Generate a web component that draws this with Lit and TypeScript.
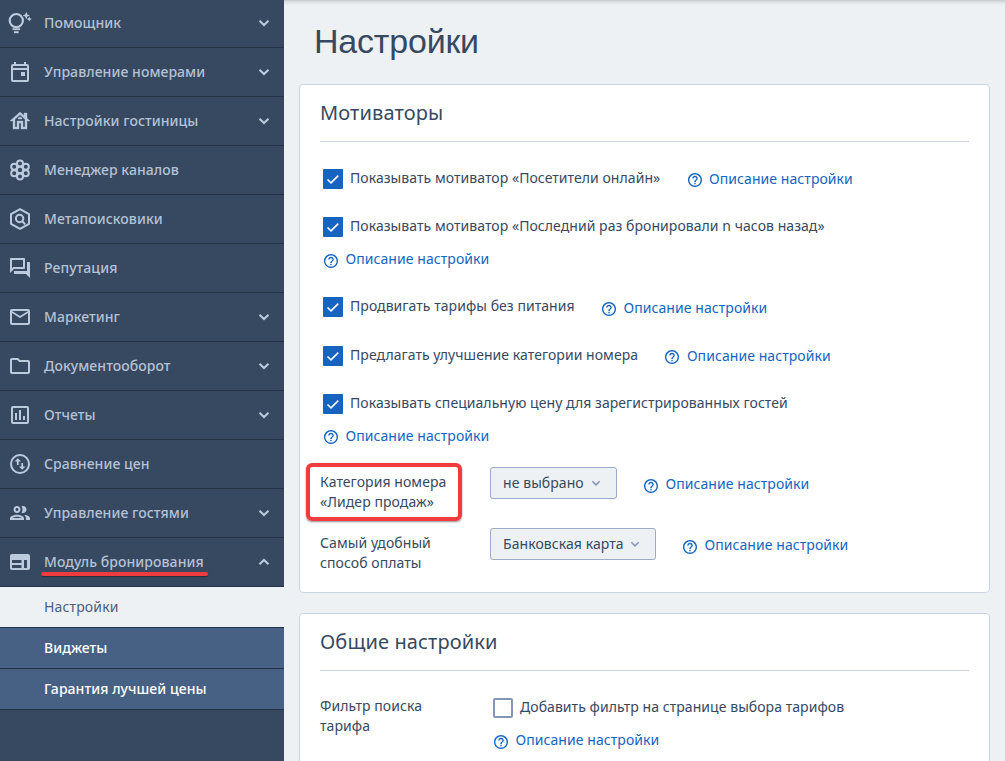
import { LitElement, html, css, svg, nothing } from "lit";
import { customElement, property } from "lit/decorators.js";
import { classMap } from "lit/directives/class-map.js";

const icons: Record<string, unknown> = {
  bulb: svg`<g fill="none" stroke="currentColor" stroke-width="2.2"><circle cx="8.300" cy="9.600" r="6.600"/><path d="M4.500 18.200h7.600M4.500 18.200" stroke-width="1.800"/><path d="M6 21.200h4.600" stroke-width="2"/></g><path d="M18.300.8l1.100 2.600 2.600 1.100-2.600 1.100-1.100 2.600-1.100-2.600-2.600-1.100 2.600-1.100zM21.300 5.600l.8 1.700 1.700.8-1.700.8-.8 1.700-.8-1.700-1.700-.8 1.700-.8z"/>`,
  event: svg`<path d="M19 4h-1V2h-2v2H8V2H6v2H5a2 2 0 0 0-2 2v14a2 2 0 0 0 2 2h14a2 2 0 0 0 2-2V6a2 2 0 0 0-2-2zm0 16H5V10h14v10zm0-12H5V6h14v2zM17 12h-4v4h4z"/>`,
  house: svg`<g stroke="currentColor" stroke-width=".35"><path d="M19 9.300V4h-3v2.600L12 3 2 12h3v8h6v-6h2v6h6v-8h3l-3-2.700zM17 18h-2v-6H9v6H7v-7.810l5-4.500 5 4.500V18z"/><path d="M10 10h4c0-1.100-.9-2-2-2s-2 .9-2 2z"/></g>`,
  hive: svg`<g fill="none" stroke="currentColor" stroke-width="2"><circle cx="12" cy="12" r="3.200"/><circle cx="12" cy="5.400" r="3"/><circle cx="12" cy="18.600" r="3"/><circle cx="6.200" cy="8.700" r="3"/><circle cx="17.800" cy="8.700" r="3"/><circle cx="6.200" cy="15.300" r="3"/><circle cx="17.800" cy="15.300" r="3"/></g>`,
  hexSearch: svg`<g fill="none" stroke="currentColor" stroke-width="2"><path d="M12 2.200l9 5v9.600l-9 5-9-5V7.200z" stroke-linejoin="round"/><circle cx="11.600" cy="11.500" r="3.700"/><path d="M14.200 14.200l3 3.200"/></g>`,
  forum: svg`<path d="M15 4v7H5.170L4 12.170V4h11m1-2H3c-.55 0-1 .45-1 1v14l4-4h10c.55 0 1-.45 1-1V3c0-.55-.45-1-1-1zm5 4h-2v9H6v2c0 .55.45 1 1 1h11l4 4V7c0-.55-.45-1-1-1z"/>`,
  mail: svg`<path d="M22 6c0-1.100-.9-2-2-2H4c-1.100 0-2 .9-2 2v12c0 1.100.9 2 2 2h16c1.100 0 2-.9 2-2V6zm-2 0l-8 5-8-5h16zm0 12H4V8l8 5 8-5v10z"/>`,
  folder: svg`<path d="M9.170 6l2 2H20v10H4V6h5.170M10 4H4c-1.100 0-1.990.9-1.990 2L2 18c0 1.100.9 2 2 2h16c1.100 0 2-.9 2-2V8c0-1.100-.9-2-2-2h-8l-2-2z"/>`,
  chart: svg`<path d="M19 3H5a2 2 0 0 0-2 2v14a2 2 0 0 0 2 2h14a2 2 0 0 0 2-2V5a2 2 0 0 0-2-2zm0 16H5V5h14v14zM7 10h2v7H7zM11 7h2v10h-2zM15 13h2v4h-2z"/>`,
  swap: svg`<circle cx="12" cy="12" r="9" fill="none" stroke="currentColor" stroke-width="2"/><path d="M6.500 9.500L9.800 6.200l3.300 3.300h-2.400V13H8.900V9.500zM17.500 14.500l-3.300 3.300-3.300-3.300h2.400V11h1.800v3.500z"/>`,
  people: svg`<path d="M9 12c1.930 0 3.500-1.570 3.500-3.500S10.930 5 9 5 5.500 6.570 5.500 8.500 7.070 12 9 12zm0-5c.83 0 1.500.67 1.500 1.500S9.830 10 9 10s-1.500-.67-1.500-1.500S8.170 7 9 7zm0 6.750c-2.340 0-7 1.170-7 3.500V19h14v-1.750c0-2.330-4.660-3.500-7-3.500zM4.340 17c.84-.58 2.870-1.250 4.660-1.250s3.820.67 4.660 1.250H4.340zm11.700-3.190c1.160.84 1.960 1.960 1.960 3.440V19h4v-1.750c0-2.020-3.500-3.170-5.960-3.440zM15 12c1.930 0 3.500-1.570 3.500-3.500S16.930 5 15 5c-.54 0-1.040.13-1.500.35.63.89 1 1.980 1 3.150s-.37 2.260-1 3.150c.46.22.96.35 1.500.35z"/>`,
  web: svg`<path d="M20 4H4c-1.100 0-1.990.9-1.990 2L2 18c0 1.100.9 2 2 2h16c1.100 0 2-.9 2-2V6c0-1.100-.9-2-2-2zm-6.500 14H4v-3h9.500v3zm0-5H4v-3h9.500v3zm5.500 5h-3v-8h3v8z"/>`,
};

interface NavItem {
  label: string;
  icon: string;
  expand?: "down" | "up";
  marked?: boolean;
}

const NAV: NavItem[] = [
  { label: "Помощник", icon: "bulb", expand: "down" },
  { label: "Управление номерами", icon: "event", expand: "down" },
  { label: "Настройки гостиницы", icon: "house", expand: "down" },
  { label: "Менеджер каналов", icon: "hive" },
  { label: "Метапоисковики", icon: "hexSearch" },
  { label: "Репутация", icon: "forum" },
  { label: "Маркетинг", icon: "mail", expand: "down" },
  { label: "Документооборот", icon: "folder", expand: "down" },
  { label: "Отчеты", icon: "chart", expand: "down" },
  { label: "Сравнение цен", icon: "swap" },
  { label: "Управление гостями", icon: "people", expand: "down" },
  { label: "Модуль бронирования", icon: "web", expand: "up", marked: true },
];

const SUB_NAV = [
  { label: "Настройки", active: true },
  { label: "Виджеты", active: false },
  { label: "Гарантия лучшей цены", active: false },
];

@customElement("side-nav")
class SideNav extends LitElement {
  static styles = css`
    :host {
      display: block;
      width: 284px;
      flex: none;
      height: 761px;
      overflow: hidden;
      background: #364961;
      color: #b5c1d5;
      font-weight: 500;
    }
    .list {
      margin-top: -1px;
    }
    .item {
      display: flex;
      align-items: center;
      height: 48px;
      padding: 0 12px 0 8px;
      border-bottom: 1px solid #243245;
    }
    .icon {
      width: 24px;
      height: 24px;
      flex: none;
      fill: currentColor;
      color: #bccade;
    }
    .label {
      position: relative;
      margin-left: 12px;
      white-space: nowrap;
    }
    .mark {
      position: absolute;
      left: -3px;
      top: 20px;
      width: 167px;
      height: 4px;
      border-radius: 2px;
      background: #ef3a3e;
      box-shadow: 0 1px 1px rgba(20, 20, 30, 0.5);
    }
    .chevron {
      width: 16px;
      height: 16px;
      margin-left: auto;
      fill: none;
      stroke: #bccade;
      stroke-width: 2.1;
    }
    .up {
      transform: rotate(180deg);
    }
    .sub {
      display: flex;
      align-items: center;
      height: 40px;
      padding-left: 44px;
      border-bottom: 1px solid #243245;
      background: #476185;
      color: #fff;
    }
    .active {
      background: #edf1f4;
      color: #4c5f7a;
      font-weight: 400;
      letter-spacing: 0.15px;
    }
  `;

  render() {
    return html`
      <nav class="list">
        ${NAV.map(
          (item) => html`
            <div class="item">
              <svg class="icon" viewBox="0 0 24 24">${icons[item.icon]}</svg>
              <span class="label"
                >${item.label}${item.marked ? html`<i class="mark"></i>` : nothing}</span
              >
              ${item.expand
                ? html`<svg
                    class=${classMap({ chevron: true, up: item.expand === "up" })}
                    viewBox="0 0 16 16"
                  >
                    <path d="M3.500 5.800l4.500 4.200 4.500-4.200" />
                  </svg>`
                : nothing}
            </div>
          `,
        )}
        ${SUB_NAV.map(
          (item) => html`<div class=${classMap({ sub: true, active: item.active })}>${item.label}</div>`,
        )}
      </nav>
    `;
  }
}

@customElement("help-link")
class HelpLink extends LitElement {
  @property({ type: Boolean, reflect: true }) low = false;

  static styles = css`
    :host {
      display: flex;
      align-items: center;
      height: 20px;
      color: #1565c0;
      white-space: nowrap;
    }
    .icon {
      width: 14px;
      height: 14px;
      margin: 2px 7.5px 0 0;
      fill: currentColor;
    }
    :host([low]) .icon {
      margin-top: 4px;
    }
  `;

  render() {
    return html`
      <svg class="icon" viewBox="2 2 20 20">
        <path
          d="M11 18h2v-2h-2v2zm1-16C6.480 2 2 6.480 2 12s4.480 10 10 10 10-4.480 10-10S17.520 2 12 2zm0 18c-4.410 0-8-3.590-8-8s3.590-8 8-8 8 3.590 8 8-3.590 8-8 8zm0-14c-2.210 0-4 1.790-4 4h2c0-1.100.9-2 2-2s2 .9 2 2c0 2-3 1.750-3 5h2c0-2.250 3-2.500 3-5 0-2.210-1.790-4-4-4z"
        />
      </svg>
      <span>Описание настройки</span>
    `;
  }
}

@customElement("check-box")
class CheckBox extends LitElement {
  @property({ type: Boolean }) checked = false;
  @property() label = "";

  static styles = css`
    :host {
      display: flex;
      align-items: center;
      height: 20px;
      white-space: nowrap;
      letter-spacing: 0.055px;
    }
    .box {
      box-sizing: border-box;
      width: 20px;
      height: 20px;
      flex: none;
      border: 2px solid #8497b8;
      border-radius: 2px;
      background: #fff;
    }
    .on {
      border: 0;
      border-radius: 1px;
      background: #1565c0;
    }
    .tick {
      display: block;
      width: 20px;
      height: 20px;
      fill: none;
      stroke: #fff;
      stroke-width: 1.6;
    }
    .text {
      margin: -2px 0 0 7px;
    }
  `;

  render() {
    return html`
      <span class=${classMap({ box: true, on: this.checked })}>
        ${this.checked
          ? html`<svg class="tick" viewBox="0 0 20 20"><path d="M4.500 10.500l3.500 3.400 7.300-7.300" /></svg>`
          : nothing}
      </span>
      <span class="text">${this.label}</span>
    `;
  }
}

@customElement("select-button")
class SelectButton extends LitElement {
  @property() value = "";

  static styles = css`
    :host {
      box-sizing: border-box;
      display: flex;
      align-items: center;
      height: 32px;
      padding: 0 15px 0 12px;
      border: 1px solid #99abc6;
      border-radius: 3px;
      background: #edf1f4;
      white-space: nowrap;
    }
    .arrow {
      width: 10px;
      height: 10px;
      margin-left: auto;
      fill: none;
      stroke: #8497b8;
      stroke-width: 1.5;
    }
  `;

  render() {
    return html`
      <span>${this.value}</span>
      <svg class="arrow" viewBox="0 0 10 10"><path d="M1.300 3.200L5 6.900l3.700-3.700" /></svg>
    `;
  }
}

@customElement("app-root")
class AppRoot extends LitElement {
  static styles = css`
    :host {
      display: flex;
      height: 761px;
      overflow: hidden;
      background: #edf1f4;
      color: #364961;
      font: 14px/20px "Noto Sans", "Open Sans", sans-serif;
      letter-spacing: 0.07px;
    }
    .main {
      flex: 1;
      min-width: 0;
      padding: 0 15px;
      background: linear-gradient(#c6cacd, #dde1e4 2px, #edf1f4 5px);
    }
    .title {
      margin: 0 0 0 15px;
      height: 84px;
      font: 400 34px/82px "Liberation Sans", sans-serif;
      letter-spacing: -0.2px;
    }
    .card {
      box-sizing: border-box;
      width: 691px;
      height: 509px;
      margin-bottom: 20px;
      padding: 0 20px;
      border: 1px solid #ccd4e1;
      border-radius: 4px;
      background: #fff;
    }
    .heading {
      margin: 0;
      height: 56px;
      border-bottom: 1px solid #ccd4e1;
      font-size: 20px;
      line-height: 56px;
      font-weight: 400;
      letter-spacing: 0.12px;
    }
    .row {
      display: flex;
      padding-left: 3px;
      margin-top: 28px;
    }
    .first {
      margin-top: 27px;
    }
    .inline {
      margin-left: 27.3px;
    }
    .down {
      padding-top: 1px;
    }
    .below {
      margin: 12px 0 0 4px;
    }
    .field {
      display: flex;
      height: 32px;
      margin-top: 29px;
    }
    .near {
      margin-top: 21px;
    }
    .name {
      position: relative;
      width: 170px;
      flex: none;
      padding-top: 5px;
    }
    .frame {
      position: absolute;
      left: -14px;
      top: -4px;
      box-sizing: border-box;
      width: 156px;
      height: 58px;
      border: 4.5px solid #f03a3e;
      border-radius: 6px;
      box-shadow: 0 1px 2px rgba(60, 60, 70, 0.6);
    }
    .room {
      width: 127px;
    }
    .pay {
      width: 166px;
    }
    .side {
      margin: 7px 0 0 27px;
    }
    .filter {
      display: flex;
      margin-top: 25px;
    }
    .filter-name {
      width: 173px;
      flex: none;
    }
    .filter-check {
      margin-top: 2px;
    }
    .filter-link {
      margin: 12px 0 0 1px;
    }
  `;

  render() {
    return html`
      <side-nav></side-nav>
      <main class="main">
        <h1 class="title">Настройки</h1>
        <section class="card">
          <h2 class="heading">Мотиваторы</h2>
          <div class="row first">
            <check-box checked label="Показывать мотиватор «Посетители онлайн»"></check-box>
            <help-link class="inline"></help-link>
          </div>
          <div class="row">
            <check-box checked label="Показывать мотиватор «Последний раз бронировали n часов назад»"></check-box>
          </div>
          <help-link class="below" low></help-link>
          <div class="row">
            <check-box checked label="Продвигать тарифы без питания"></check-box>
            <help-link class="inline down"></help-link>
          </div>
          <div class="row">
            <check-box checked label="Предлагать улучшение категории номера"></check-box>
            <help-link class="inline"></help-link>
          </div>
          <div class="row">
            <check-box checked label="Показывать специальную цену для зарегистрированных гостей"></check-box>
          </div>
          <help-link class="below"></help-link>
          <div class="field near">
            <div class="name">Категория номера<br />«Лидер продаж»<i class="frame"></i></div>
            <select-button class="room" value="не выбрано"></select-button>
            <help-link class="side" low></help-link>
          </div>
          <div class="field">
            <div class="name">Самый удобный<br />способ оплаты</div>
            <select-button class="pay" value="Банковская карта"></select-button>
            <help-link class="side" low></help-link>
          </div>
        </section>
        <section class="card">
          <h2 class="heading">Общие настройки</h2>
          <div class="filter">
            <div class="filter-name">Фильтр поиска<br />тарифа</div>
            <div>
              <check-box class="filter-check" label="Добавить фильтр на странице выбора тарифов"></check-box>
              <help-link class="filter-link" low></help-link>
            </div>
          </div>
        </section>
      </main>
    `;
  }
}
